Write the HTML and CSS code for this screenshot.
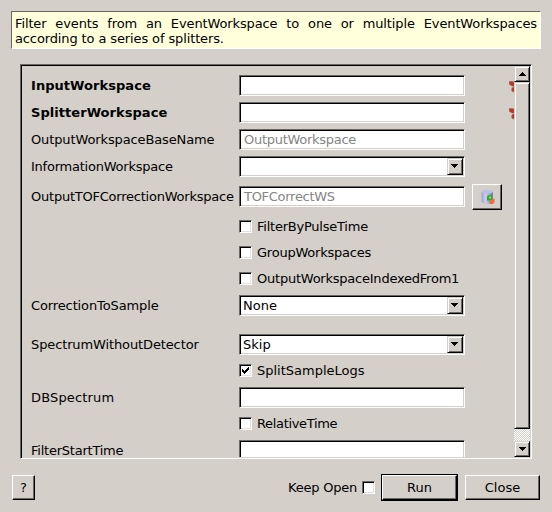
FILE: index.html
```html
<!DOCTYPE html>
<html lang="en">
<head>
<meta charset="utf-8">
<title>FilterEvents</title>
<link rel="stylesheet" href="styles.css">
</head>
<body>
<div class="banner"><p>Filter events from an EventWorkspace to one or multiple EventWorkspaces according to a series of splitters.</p></div>
<div class="frame">
  <div class="view">
    <div class="row"><span class="label bold">InputWorkspace</span><div class="field"></div>
      <svg class="star" width="12" height="12" viewBox="0 0 12 12"><g fill="#bd3628" stroke="#94685f" stroke-width=".6"><path d="M.2.5h3.300l2.500 1.200V5H3L.2 3.200z"/><path d="M2.900 7.200 4.400 5.900H7V10.800H3.800L2.700 9.500z"/></g></svg></div>
    <div class="row"><span class="label bold">SplitterWorkspace</span><div class="field"></div>
      <svg class="star" width="12" height="12" viewBox="0 0 12 12"><g fill="#bd3628" stroke="#94685f" stroke-width=".6"><path d="M.2.5h3.300l2.500 1.200V5H3L.2 3.200z"/><path d="M2.900 7.200 4.400 5.900H7V10.800H3.800L2.700 9.500z"/></g></svg></div>
    <div class="row"><span class="label snug">OutputWorkspaceBaseName</span><div class="field hint">OutputWorkspace</div></div>
    <div class="row"><span class="label tight">InformationWorkspace</span><div class="field combo"><span></span><i class="drop"><svg width="7" height="4"><path d="M0 0h7v1H6v1H5v1H4v1H3V3H2V2H1V1H0z"/></svg></i></div></div>
    <div class="row tall"><span class="label tight">OutputTOFCorrectionWorkspace</span><div class="field hint">TOFCorrectWS</div>
      <div class="button tool"><svg width="14" height="16" viewBox="0 0 14 16"><defs><linearGradient id="db"><stop offset="0" stop-color="#9da1ca"/><stop offset=".35" stop-color="#c9cef0"/><stop offset="1" stop-color="#7377a6"/></linearGradient></defs><path d="M.5 2.500V12.500Q1 14.500 6 14.500T12 12.500V2.500z" fill="url(#db)"/><ellipse cx="6.250" cy="2.700" rx="5.750" ry="1.900" fill="#bcc1e4"/><path d="M9 11l4.500-1.500V13L12 15H8.500z" fill="#f4693b"/><path d="M6 7.500 8 6h3v4l-2 1.500H6z" fill="#30aa30"/><rect x="8" y="7.500" width="2" height="2" fill="#83e15d"/></svg></div></div>
    <div class="row check"><i class="box"></i><span class="tight">FilterByPulseTime</span></div>
    <div class="row check"><i class="box"></i><span class="tight">GroupWorkspaces</span></div>
    <div class="row check"><i class="box"></i><span class="tight">OutputWorkspaceIndexedFrom1</span></div>
    <div class="row spaced"><span class="label snug">CorrectionToSample</span><div class="field combo"><span>None</span><i class="drop"><svg width="7" height="4"><path d="M0 0h7v1H6v1H5v1H4v1H3V3H2V2H1V1H0z"/></svg></i></div></div>
    <div class="row"><span class="label snug">SpectrumWithoutDetector</span><div class="field combo"><span>Skip</span><i class="drop"><svg width="7" height="4"><path d="M0 0h7v1H6v1H5v1H4v1H3V3H2V2H1V1H0z"/></svg></i></div></div>
    <div class="row check"><i class="box"><svg width="7" height="7"><path d="M0 2h1v1h1v1h1V3h1V2h1V1h1V0h1v3H6v1H5v1H4v1H3v1H2V6H1V5H0z"/></svg></i><span>SplitSampleLogs</span></div>
    <div class="row"><span class="label loose">DBSpectrum</span><div class="field"></div></div>
    <div class="row check"><i class="box"></i><span class="tighter">RelativeTime</span></div>
    <div class="row"><span class="label tight">FilterStartTime</span><div class="field"></div></div>
  </div>
  <div class="scroll">
    <div class="button arrow"><svg width="7" height="4"><path d="M3 0h1v1h1v1h1v1h1v1H0V3h1V2h1V1h1z"/></svg></div>
    <div class="button thumb"></div>
    <div class="track"></div>
    <div class="button arrow"><svg width="7" height="4"><path d="M0 0h7v1H6v1H5v1H4v1H3V3H2V2H1V1H0z"/></svg></div>
  </div>
</div>
<div class="actions">
  <div class="button help">?</div>
  <div class="keep"><span class="tight">Keep Open</span><i class="box"></i></div>
  <div class="default"><div class="button run">Run</div></div>
  <div class="button close">Close</div>
</div>
</body>
</html>
```
FILE: styles.css
```css
* { box-sizing: border-box; }
body {
  margin: 0; padding: 11px 11px 0; width: 552px; height: 512px; overflow: hidden;
  background: #d4cfc8; color: #000;
  font: 13px/15px "DejaVu Sans", sans-serif;
}
svg { display: block; flex: none; }
.banner {
  width: 530px; height: 38px; padding: 4px 3px 0;
  background: #ffffdc; border: 1px solid; border-color: #6a6764 #fff #fff #6a6764;
}
.banner p { margin: 0; text-align: justify; letter-spacing: -.12px; }
.frame {
  display: flex; width: 512px; height: 395px; margin: 15px 0 0 9px;
  border: 1px solid; border-color: #6a6764 #fff #fff #6a6764;
  box-shadow: inset 1px 1px #000, inset -1px -1px #d4cfc8;
  padding: 1px;
}
.view { width: 492px; height: 391px; padding: 6px 0 0 9px; overflow: hidden; }
.row { display: flex; align-items: center; height: 27px; white-space: nowrap; }
.tall { height: 33px; margin-bottom: 1px; }
.spaced { margin-bottom: 12px; }
.check { height: 25px; margin-bottom: 1px; padding-left: 208px; gap: 5px; }
.label { flex: none; width: 208px; }
.bold { font-weight: bold; letter-spacing: .05px; }
.snug { letter-spacing: -.12px; }
.tight { letter-spacing: -.23px; }
.tighter { letter-spacing: -.33px; }
.loose { letter-spacing: .15px; }
.field {
  flex: none; display: flex; align-items: center; width: 226px; height: 21px; padding: 0 4px;
  background: #fff; border: 1px solid; border-color: #6a6764 #fff #fff #6a6764;
  box-shadow: inset 1px 1px #000, inset -1px -1px #d4cfc8;
}
.hint { color: #858585; letter-spacing: -.28px; }
.combo { justify-content: space-between; padding: 0 1px 0 3px; }
.drop {
  display: flex; align-items: center; justify-content: center; width: 16px; height: 17px;
  background: #d4cfc8; border: 1px solid; border-color: #d4cfc8 #000 #000 #d4cfc8;
  box-shadow: inset 1px 1px #fff, inset -1px -1px #6a6764;
}
.drop svg { margin: 0 1px 1px 0; }
.star { margin: 3px 0 0 44px; }
.button {
  display: flex; align-items: center; justify-content: center; background: #d4cfc8;
  border: 1px solid; border-color: #fff #000 #000 #fff;
  box-shadow: inset -1px -1px #6a6764;
}
.tool { width: 30px; height: 26px; margin: 1px 0 0 7px; flex: none; }
.tool svg { margin-left: 2px; }
.box {
  display: flex; flex: none; align-items: center; justify-content: center; width: 13px; height: 13px;
  background: #fff; border: 1px solid; border-color: #6a6764 #fff #fff #6a6764;
  box-shadow: inset 1px 1px #000, inset -1px -1px #e4e1dd;
}
.scroll { display: flex; flex-direction: column; width: 16px; height: 391px; }
.arrow {
  height: 16px; border-color: #d4cfc8 #000 #000 #d4cfc8;
  box-shadow: inset 1px 1px #fff, inset -1px -1px #6a6764;
}
.thumb {
  height: 347px; border-color: #d4cfc8 #000 #000 #d4cfc8;
  box-shadow: inset 1px 1px #fff, inset -1px -1px #6a6764;
}
.track { height: 12px; background: repeating-conic-gradient(#fff 0 25%, #d4cfc8 0 50%) 0 0 / 2px 2px; }
.actions { display: flex; align-items: center; height: 27px; margin-top: 15px; padding-left: 1px; }
.help { width: 23px; height: 25px; }
.keep { display: flex; align-items: center; gap: 5px; margin-left: auto; margin-right: 6px; }
.default { width: 77px; height: 27px; border: 1px solid #000; }
.run { height: 25px; }
.close { width: 75px; height: 25px; margin: 0 1px 0 7px; }
```
